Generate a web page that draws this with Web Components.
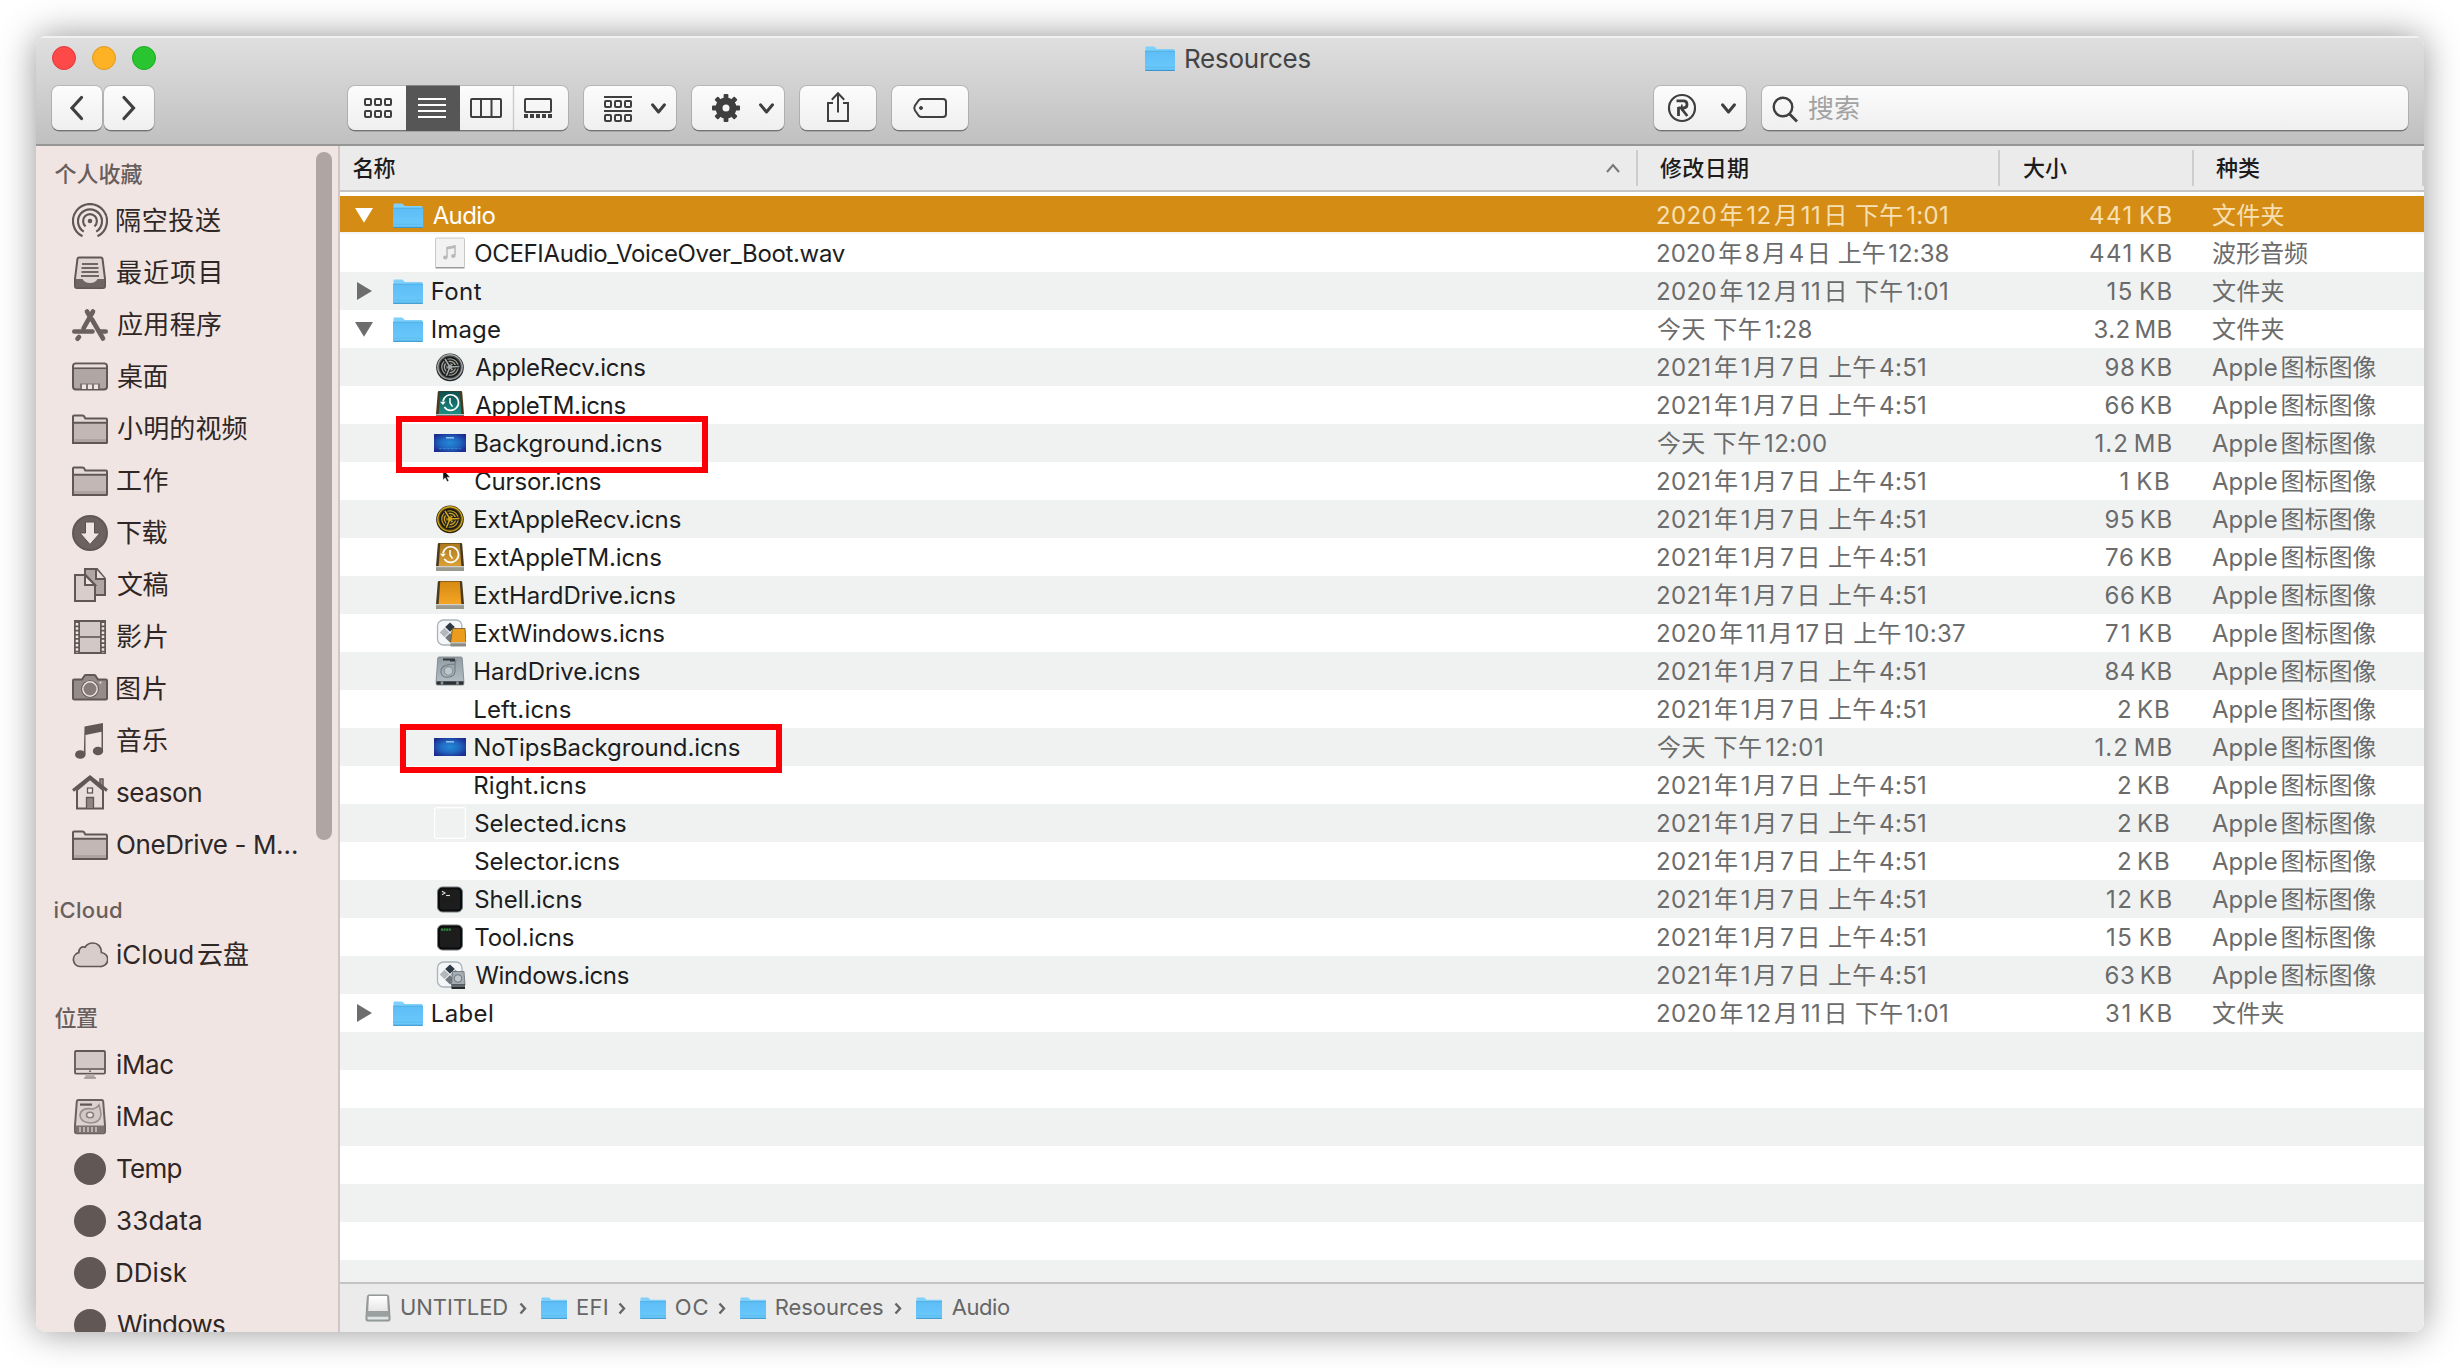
<!DOCTYPE html>
<html lang="zh-CN">
<head>
<meta charset="utf-8">
<title>Resources</title>
<style>
html,body{margin:0;padding:0;background:#fff;width:2460px;height:1368px;overflow:hidden}
body{font-family:Inter,"Noto Sans CJK SC",sans-serif;font-size:24px;color:#1d1d1d}
</style>
</head>
<body>
<finder-window></finder-window>
<script>
const define = (name, cls) => customElements.define(name, cls);
const ctx = document.createElement('canvas').getContext('2d');
const FOLDER = '<defs><linearGradient id="f" x1="0" y1="0" x2="0" y2="1"><stop offset="0" stop-color="#5dbdf6"/><stop offset="1" stop-color="#6bc9fb"/></linearGradient></defs><path d="M.5 23.500V1.500Q.5.5 1.500.5H8.500Q9.500.5 10.500 1.700L11.800 3H28.500Q29.500 3 29.500 4V23.500z" fill="#7fd0fa"/><path d="M0 5h30v18.500q0 1-1 1H1q-1 0-1-1z" fill="url(#f)"/><path d="M0 5.200h30" stroke="#52aee0" stroke-width="1"/><path d="M.5 21.300h29" stroke="#5ab6ea" stroke-width=".8"/><path d="M.3 24.300h29.400" stroke="#3d98cd" stroke-width="1.200"/>';
const recv = (a, b, c) => `<circle cx="16" cy="16.400" r="13.800" fill="${a}"/><circle cx="16" cy="16" r="12.200" fill="${b}" stroke="${c}" stroke-width="1.400"/><circle cx="16" cy="16" r="9.700" fill="${c}" stroke="#1b1a17" stroke-width="1.700"/><circle cx="16" cy="16" r="7" fill="none" stroke="#2b2924" stroke-width="1.500"/><circle cx="16" cy="16" r="4.300" fill="none" stroke="#2b2924" stroke-width="1.500"/><path d="M16 16L25.500 15.500M16 16L11 8M16 16L12.300 24.800" stroke="#1b1a17" stroke-width="3.600"/><path d="M16 16L25.500 15.500M16 16L11 8M16 16L12.300 24.800" stroke="${c}" stroke-width="1.600"/><circle cx="16" cy="16" r="2.200" fill="${c}"/>`;
const drive = (a, b, base, extra='') => `<defs><linearGradient id="d" x1="0" y1="0" x2="0" y2="1"><stop offset="0" stop-color="${a}"/><stop offset="1" stop-color="${b}"/></linearGradient></defs><path d="M5 2h22q1 0 1.200 1L30 25v4q0 1-1 1H3q-1 0-1-1v-4L3.800 3Q4 2 5 2z" fill="#4a3a20"/><path d="M6.200 2.600h19.600L27.300 25H4.700z" fill="url(#d)"/><path d="M2 25.300h28V29q0 1-1 1H3q-1 0-1-1z" fill="${base}"/><path d="M2 25.700h28" stroke="#e0e0dc" stroke-width="1"/><circle cx="27.500" cy="28" r=".8" fill="#5fbf55"/>${extra}`;
const CLOCK = '<path d="M9 12.300A7.800 7.800 0 1 1 10.300 18" fill="none" stroke="#fff" stroke-width="1.600"/><path d="M6 12.700l2.900 3.300 2.900-3.300z" fill="#fff"/><path d="M16 9v5l2.500 3.600" fill="none" stroke="#fff" stroke-width="1.500"/>';
const HDD = '<defs><linearGradient id="h" x1="0" y1="0" x2="0" y2="1"><stop offset="0" stop-color="#929da3"/><stop offset="1" stop-color="#b6c1c7"/></linearGradient></defs><path d="M5 2h22q1 0 1.200 1L29.800 25v4q0 1-1 1H3.200q-1 0-1-1v-4L3.800 3Q4 2 5 2z" fill="url(#h)" stroke="#777f84" stroke-width=".8"/><path d="M9 3.500h12v3h-5V5.500H9z" fill="#33383c"/><path d="M21 9v7.500c-1 7.500-13 7.500-14 1C6.500 12 10 9.500 21 9l1-4" fill="none" stroke="#737e84" stroke-width="1.200"/><circle cx="14.500" cy="16" r="4.300" fill="#bcc7cd" stroke="#78848b" stroke-width=".9"/><path d="M2.500 26.200h27V29q0 .8-1 .8H3.500q-1 0-1-.8z" fill="#2c3033"/><path d="M8 26.500v3M23.500 26.500v3" stroke="#8d979c" stroke-width="2.500"/>';
const WIN = '<rect x="3.500" y="3" width="24.500" height="25" rx="6" fill="#f4f6f8" stroke="#a9b3b9" stroke-width="1.300"/><path d="M16 5.500l4.800 4.600-4.800 4.600-4.800-4.600z" fill="#2d3a45"/><path d="M10.500 10.800l4.800 4.700-4.800 4.700-4.800-4.700z" fill="#b4b8bd"/><path d="M21.500 10.800l4.800 4.700-4.800 4.700-4.800-4.700z" fill="#8a9299"/><path d="M16 16l4.800 4.700-4.800 4.700-4.800-4.700z" fill="#6f767c"/>';
const THUMB = '<defs><radialGradient id="b" cx=".5" cy=".5" r=".6"><stop offset="0" stop-color="#218ad5"/><stop offset=".5" stop-color="#2069c2"/><stop offset="1" stop-color="#1c2c90"/></radialGradient></defs><rect y="7" width="32" height="18" fill="url(#b)"/><rect x="12" y="10" width="8" height="1.600" fill="#b3d9f5" opacity=".75"/>';
const TERM = '<rect x="3.500" y="4" width="25" height="25" rx="5" fill="#0b0b0b" stroke="#71797c" stroke-width="1"/><rect x="6" y="6.500" width="20" height="20" rx="2.500" fill="#1d1d1d"/>';
const S='fill="none" stroke="#615856" stroke-width="2"';
const SFOLD = `<path d="M1 33V5.500Q1 4.500 2 4.500H10.500Q12 4.500 12.500 6L13.300 7.500H34Q35 7.500 35 8.500V31Q35 32 34 32H2Q1 32 1 31z" fill="#e4dad8" stroke="#615856" stroke-width="2"/><path d="M2 12h32v19H2z" fill="#c3b7b5"/><path d="M2 29.500h32" stroke="#aea3a1" stroke-width="3"/><path d="M2 11.700h32M1 5v26q0 1 1 1h32q1 0 1-1V9" ${S}/>`;
const DISK = '<circle cx="18" cy="18" r="16" fill="#615856"/>';
/* Each entry: width, height, markup */
const ICONS = {
folder:[30,25,FOLDER],
wav:[32,32,'<rect x="1.500" y="1" width="29" height="29.500" rx="1" fill="#f2f2f2" stroke="#c8c8c8"/><path d="M1.500 30.800h29" stroke="#919191" stroke-width="1.300"/><path d="M13 20V10.500l8-1.500v9.500" fill="none" stroke="#b9b9b9" stroke-width="1.500"/><path d="M13 11.200l8-1.500" stroke="#b9b9b9" stroke-width="2.500"/><ellipse cx="11.300" cy="20.500" rx="2.300" ry="2" fill="#b9b9b9"/><ellipse cx="19.300" cy="19" rx="2.300" ry="2" fill="#b9b9b9"/>'],
recv:[32,32,recv('#23272a','#4a4e50','#a3a9aa')],
erecv:[32,32,recv('#2a2208','#54420e','#cfa41f')],
tm:[32,32,drive('#0c4f50','#1d8f84','#555',CLOCK)],
etm:[32,32,drive('#ad7a1e','#dba034','#9a9a90',CLOCK)],
ehd:[32,32,drive('#d58a12','#f4a526','#9a9a90')],
ewin:[32,32,WIN+'<path d="M18.500 11.500h12.500l1 14H16.500z" fill="#eb9c1c" stroke="#5a461d" stroke-width=".7"/><path d="M16.500 25.500H32V29.500H16.500z" fill="#8b8b84"/><path d="M16.500 25.800H32" stroke="#ddd"/>'],
win:[32,32,WIN+'<path d="M18.500 12.500H30l1 13.500H17.500z" fill="#a3adb3" stroke="#666e73" stroke-width=".8"/><circle cx="24" cy="19.500" r="3.800" fill="#bdc7cc" stroke="#6d777c"/><path d="M17.500 25.500H31V30H17.500z" fill="#272b2e"/><path d="M18 27h13" stroke="#8d979c" stroke-width="1.200"/>'],
hd:[32,32,HDD],
bg:[32,32,THUMB+'<path d="M5 21.500h22" stroke="#4da0e2" stroke-width=".8" stroke-dasharray="3 1" opacity=".6"/>'],
bg2:[32,32,THUMB],
none:[32,32,''],
cursor:[32,32,'<path d="M9 4.500V15l2.200-2.200 2 3.800 1.600-.8-1.900-3.600h3.200z" fill="#111" stroke="#ddd" stroke-width=".5"/>'],
selected:[32,32,'<rect x=".6" y=".6" width="30.800" height="30.800" rx="2" fill="none" stroke="#fff" stroke-width="1.200"/>'],
shell:[32,32,TERM+'<path d="M8 8.300l3 1.700-3 1.700" fill="none" stroke="#ddd" stroke-width="1.100"/><path d="M12 12.500h4" stroke="#ddd" stroke-width="1.100"/>'],
tool:[32,32,TERM+'<path d="M7 8.700h10" stroke="#2d8a3a" stroke-width="2.200" stroke-dasharray="2 .6"/>'],
usb:[26,28,'<defs><linearGradient id="u" x1="0" y1="0" x2="0" y2="1"><stop offset="0" stop-color="#fff"/><stop offset="1" stop-color="#e6e6e6"/></linearGradient></defs><path d="M4 1h18q1.500 0 1.600 1.500L25 23v2.500q0 1.500-1.500 1.500h-21Q1 27 1 25.500V23L2.400 2.500Q2.500 1 4 1z" fill="#9c9f9f" stroke="#8b9191"/><path d="M4 2h18l.8 15H3.200z" fill="url(#u)"/><path d="M2.500 22.800h21l-.3 2.700h-20.400z" fill="#dfe4e4"/>'],
airdrop:[36,36,`<g fill="none" stroke="#615856" stroke-width="2.200"><path d="M10.500 33.300A17 17 0 1 1 25.500 33.300"/><path d="M11.800 28.600A12 12 0 1 1 24.200 28.600"/><path d="M13.600 23.400A6.900 6.900 0 1 1 22.400 23.400"/></g><circle cx="18" cy="18" r="2.300" fill="#615856"/>`],
recents:[36,36,`<path d="M7 2.500h22q1.200 0 1.500 1.200L33 24v7q0 2-2 2H5q-2 0-2-2v-7L5.500 3.700Q5.800 2.500 7 2.500z" fill="#e0d5d3" ${S.replace('fill="none"','')}/><path d="M3.500 24h7q2 4 7.500 4t7.500-4h7v7q0 1.500-1.500 1.500H5Q3.500 32.500 3.500 31z" fill="#6f6563"/><path d="M10 9h16M9.500 13h17M9.500 17h17M9 21h18" stroke="#6f6563" stroke-width="1.800"/>`],
apps:[36,36,`<g stroke="#6a605e" stroke-width="4.600" stroke-linecap="round"><path d="M21 4.500L11.500 21.300M15 4.500L17 8M20 12.500L31 31.500"/><path d="M2.300 24.500H20.500M27.500 24.500H33.700M7 30L5.500 31.800"/></g>`],
desktop:[36,36,`<rect x="1" y="4.500" width="34" height="26" rx="3" fill="#b0a6a4" stroke="#615856" stroke-width="2"/><path d="M2 8.500V7q0-1.500 1.500-1.500h29Q34 5.500 34 7v1.500z" fill="#e9dedc"/><path d="M2 9.300h32" stroke="#615856" stroke-width="1.500"/><path d="M8 30v-5.500h20V30" fill="#7c726f"/><path d="M10 25.500h4V30h-4zM16 25.500h4V30h-4zM22 25.500h4V30h-4z" fill="#f0e5e3"/>`],
sfolder:[36,36,SFOLD],
down:[36,36,'<circle cx="18" cy="18" r="18" fill="#615856"/><circle cx="18" cy="18" r="16" fill="#6c6260"/><path d="M13.500 7h9v11H28L18 29.500 8 18h5.500z" fill="#f0e5e3" stroke="#5a514f" stroke-width="1"/>'],
docs:[36,36,`<path d="M13 2h12l8 9.500V28H13z" fill="#b0a6a4" ${S.replace('fill="none"','')}/><path d="M24 2v10h9" fill="#e6dcda" ${S.replace('fill="none"','')}/><path d="M3 8h10.500L23 18v16H3z" fill="#d8cdca" ${S.replace('fill="none"','')}/><path d="M13 8v10h10z" fill="#efe5e3" ${S.replace('fill="none"','')}/>`],
film:[36,36,`<rect x="3" y="2" width="30" height="32" fill="#d2c8c5" stroke="#615856" stroke-width="2"/><path d="M5 2v32M31 2v32" stroke="#615856" stroke-width="6"/><path d="M5 4v30M31 4v30" stroke="#efe5e3" stroke-width="2.500" stroke-dasharray="2.500 1.700"/><path d="M8 18h20" stroke="#615856" stroke-width="1.600"/>`],
camera:[36,36,`<path d="M2 8.500h8l2.500-3.800q.5-.7 1.500-.7h8q1 0 1.500.7L26 8.500h8q1 0 1 1V27q0 1.500-1.500 1.500h-31Q1 28.500 1 27V9.500q0-1 1-1z" fill="#958b88" ${S.replace('fill="none"','')}/><circle cx="18" cy="18" r="8.800" fill="#615856"/><circle cx="18" cy="18" r="7.200" fill="#877c7a" stroke="#f0e5e3" stroke-width="1.400"/><circle cx="28.500" cy="11.500" r="1" fill="#f0e5e3"/>`],
music:[36,36,'<path d="M12.500 3.500L31 0V27.500H29.500V8.700L13.500 12V31H11.800z" fill="#615856"/><ellipse cx="8.300" cy="31.500" rx="5.300" ry="4.300" fill="#615856"/><ellipse cx="26" cy="28" rx="5.200" ry="4.300" fill="#615856"/>'],
home:[36,36,`<path d="M28 10V4h3v9" fill="#a2918f" stroke="#615856" stroke-width="1.500"/><path d="M5 15v18.500h26V15L18 4z" fill="#e9dedc" ${S.replace('fill="none"','')}/><path d="M1 15.500L18 2l17 13.500" fill="none" stroke="#615856" stroke-width="3"/><rect x="15.500" y="13" width="5" height="5" fill="#f5ebe9" stroke="#615856" stroke-width="1.300"/><path d="M14.500 33V22.500h7V33" fill="#8f8482" stroke="#615856" stroke-width="1.300"/>`],
cloud:[36,36,`<path d="M8 29.500a7 7 0 0 1-1.200-13.800C6.800 11.500 9.500 9 13 10.200 14.800 7.300 17.600 6 20.800 6c5 0 8.800 4 8.600 9.500A7 7 0 0 1 28 29.500z" fill="#d8cdca" stroke="#615856" stroke-width="1.700"/>`],
imac:[36,36,`<rect x="3" y="4" width="30" height="22.500" rx="1" fill="#d2c8c5" stroke="#615856" stroke-width="1.800"/><path d="M3 22h30" stroke="#615856" stroke-width="1.500"/><path d="M4 23h28v2.700H4z" fill="#e4dad8"/><path d="M14 27h8l1 4H13z" fill="#b5aba9"/><path d="M12 31h12" stroke="#9a908e" stroke-width="1.400"/><circle cx="18" cy="24.200" r=".9" fill="#615856"/>`],
sdrive:[36,36,`<path d="M6.500 1h23Q31 1 31.200 2.500L33 26.500v6q0 1.700-1.700 1.700H4.700Q3 34.200 3 32.500v-6L4.800 2.500Q5 1 6.500 1z" fill="#ddd2d0" stroke="#6a605e" stroke-width="2"/><path d="M3.500 26.500h29V32.500q0 1.200-1.200 1.200H4.700q-1.200 0-1.200-1.200z" fill="#7c726f"/><path d="M8 28v5M12 28v5M16 28v5M20 28v5M24 28v5" stroke="#c3b8b6" stroke-width="1.800"/><rect x="8" y="4.500" width="12" height="2.200" fill="#615856"/><path d="M27 6q-2 3-6 4-12-2-13 6 0 7 10 8 10 0 11-8 0-3-2-10z" fill="#d2c8c5" stroke="#9a8f8d" stroke-width="1.600"/><ellipse cx="18" cy="16" rx="3.500" ry="2.700" fill="#f0e5e3" stroke="#8b807e" stroke-width="1.600"/>`],
disk:[36,36,DISK],
chev:[8,13,'<path d="M1.500 1.500L6 6.500 1.500 11.500" fill="none" stroke="#666" stroke-width="2.400"/>'],
open:[18,18,'<path d="M0 2h18L9 16.700z" fill="var(--tri,#6d6d6d)"/>'],
closed:[18,18,'<path d="M2 0l15 9-15 9z" fill="var(--tri,#6d6d6d)"/>'],
};
define('ui-icon', class extends HTMLElement {
  connectedCallback(){
    const [w,h,m] = ICONS[this.getAttribute('name')];
    const W = +(this.getAttribute('w')||w), H = +(this.getAttribute('h')||h);
    (this.shadowRoot||this.attachShadow({mode:'open'})).innerHTML = `<style>:host{display:block;flex:none;width:${W}px;height:${H}px}svg{display:block}</style><svg width="${W}" height="${H}" viewBox="0 0 ${w} ${h}" preserveAspectRatio="none">${m}</svg>`;
  }
});
/* Label whose visible glyphs span exactly the width given in "w" */
define('fit-text', class extends HTMLElement {
  connectedCallback(){
    const root = this.shadowRoot||this.attachShadow({mode:'open'});
    const t = this.textContent, w = +this.getAttribute('w');
    const gap = +(this.getAttribute('gap')||0), ws = +(this.getAttribute('ws')||0);
    root.innerHTML = `<style>:host{display:block;flex:none;white-space:pre;width:${w}px}b{font-weight:inherit;display:block;word-spacing:${ws}px}i{font-style:normal;margin-left:${gap}px}</style><b></b>`;
    const cs = getComputedStyle(this);
    ctx.font = `${cs.fontWeight} ${cs.fontSize} ${cs.fontFamily}`;
    const m = ctx.measureText(t);
    const parts = gap ? t.split(/(?<=[\x21-\x7e])(?=[\u4e00-\u9fff])|(?<=[\u4e00-\u9fff])(?=[\x21-\x7e])/) : [t];
    const spaces = (t.match(/ /g)||[]).length;
    const ink = m.actualBoundingBoxLeft + m.actualBoundingBoxRight + (parts.length-1)*gap + spaces*ws;
    const b = root.querySelector('b');
    b.style.letterSpacing = ((w-ink)/Math.max(1,t.length-1)).toFixed(3)+'px';
    b.style.marginLeft = m.actualBoundingBoxLeft.toFixed(2)+'px';
    parts.forEach((p,i)=>{ if(i===0) b.append(p); else {const s=document.createElement('i'); s.textContent=p; b.append(s);} });
  }
});
define('tool-button', class extends HTMLElement {
  connectedCallback(){
    this.attachShadow({mode:'open'}).innerHTML = `<style>:host{display:flex;box-sizing:border-box;flex:none;height:44px;width:${this.getAttribute('w')}px;margin-left:${this.getAttribute('gap')||0}px;border-radius:7px;background:linear-gradient(#fcfcfc,#efefef);box-shadow:0 0 0 1px rgba(0,0,0,.13),0 1.500px 0 rgba(0,0,0,.32);overflow:visible}</style><slot></slot>`;
  }
});
const sq = (x,y)=>[0,10,20].map(d=>`<rect x="${x+d+1}" y="${y+1}" width="6" height="6" rx="1"/>`).join('');
const dn = x => `<path d="M${x} 18.800l6 7.200 6-7.200" stroke-width="3" stroke-linecap="round" stroke-linejoin="round"/>`;
let teeth=''; for(let i=0;i<8;i++) teeth+=`<rect x="31.600" y="8" width="4.800" height="7" rx="1" transform="rotate(${i*45} 34 22)"/>`;
define('finder-toolbar', class extends HTMLElement {
  connectedCallback(){
    this.attachShadow({mode:'open'}).innerHTML = `<style>
:host{display:flex;flex-direction:column;box-sizing:border-box;height:110px;border-top:2px solid #f1f1f1;border-bottom:2px solid #969696;background:linear-gradient(#dfdfdf,#c0c0c0)}
.title{display:flex;height:40px;align-items:center;padding:0 16px}
.dot{width:24px;height:24px;border-radius:50%;box-sizing:border-box;margin-right:16px;border:1.500px solid}
.name{display:flex;align-items:center;gap:11px;margin-left:973px;font-size:26px;color:#444;line-height:40px}
.name fit-text{padding-top:2px}
.bar{display:flex;margin-top:8px;padding-left:16px}
svg{display:block;fill:none;stroke:#3f3f3f;stroke-width:2}
.search{display:flex;align-items:center;font-size:26px;line-height:42px;color:#a2a2a2}
.search fit-text{padding-top:2px}
</style>
<div class="title"><div class="dot" style="background:#fd4948;border-color:#e2383b"></div><div class="dot" style="background:#fdb225;border-color:#df9a1e"></div><div class="dot" style="background:#29c531;border-color:#1cab25"></div>
<div class="name"><ui-icon name="folder"></ui-icon><fit-text w="124.500">Resources</fit-text></div></div>
<div class="bar">
<tool-button w="50"><svg width="50" height="44"><path d="M29.500 11.500L20 22l9.500 10.500" stroke-width="3.200" stroke-linecap="round"/></svg></tool-button>
<tool-button w="50" gap="2"><svg width="50" height="44"><path d="M20 11.500L29.500 22 20 32.500" stroke-width="3.200" stroke-linecap="round"/></svg></tool-button>
<tool-button w="220" gap="194"><svg width="220" height="44" style="overflow:visible"><rect x="58" y="-.5" width="54" height="45.500" fill="#565656" stroke="none"/><path d="M165.500 0v44" stroke="#cdcdcd" stroke-width="1.500"/>${sq(16,12)}${sq(16,24)}<path d="M70 13h28M70 19h28M70 25h28M70 31h28" stroke="#fff"/><rect x="123" y="13" width="30" height="18" rx="1"/><path d="M133 13v18M143.500 13v18"/><rect x="177" y="13" width="26" height="13" rx="1"/><path d="M176 30h28" stroke-width="4" stroke-dasharray="4 2"/></svg></tool-button>
<tool-button w="92" gap="16"><svg width="92" height="44"><path d="M20 11h28M20 25h28"/>${sq(20,14)}${sq(20,28)}${dn(68.5)}</svg></tool-button>
<tool-button w="92" gap="16"><svg width="92" height="44"><g fill="#3f3f3f" stroke="none">${teeth}</g><circle cx="34" cy="22" r="7" stroke-width="7"/>${dn(68.5)}</svg></tool-button>
<tool-button w="76" gap="16"><svg width="76" height="44"><path d="M33 17H28v18h20V17h-5M38 26.500V7.500M31.800 13.700L38 7.300l6.200 6.400"/></svg></tool-button>
<tool-button w="76" gap="16"><svg width="76" height="44"><path d="M29.500 13H51q3 0 3 3v12q0 3-3 3H29.500Q28 31 27 30L23 24.500q-1.500-2.500 0-5L27 14q1-1 2.500-1z"/><circle cx="29" cy="22" r="1.500" fill="#3f3f3f" stroke-width="1"/></svg></tool-button>
<tool-button w="92" gap="686"><svg width="92" height="44"><circle cx="28" cy="22" r="13" stroke-width="2.200"/><path d="M22.500 14.800h7q3.500 0 3.500 3.600 0 3.300-3.500 3.600h-2.500l6.300 8M24.500 21v9" stroke-width="2.800"/><path d="M27.800 18.500v6" stroke-width="1.600"/>${dn(68.5)}</svg></tool-button>
<tool-button w="646" gap="16"><div class="search"><svg width="47" height="44"><circle cx="21" cy="21" r="9.300" stroke-width="2.400"/><path d="M27.500 28l7.500 7.500" stroke-width="2.800"/></svg><fit-text w="50">搜索</fit-text></div></tool-button>
</div>`;
  }
});
define('side-item', class extends HTMLElement {
  connectedCallback(){
    this.attachShadow({mode:'open'}).innerHTML = `<style>:host{display:flex;height:52px;flex:none;align-items:center;gap:9px;padding-left:36px;font-size:26px;line-height:52px;color:#2f2725}</style><ui-icon name="${this.getAttribute('icon')}"></ui-icon><slot></slot>`;
  }
});
define('side-section', class extends HTMLElement {
  connectedCallback(){
    this.attachShadow({mode:'open'}).innerHTML = `<style>:host{display:flex;flex-direction:column;flex:none;padding-top:${this.getAttribute('pad')}px}header{font-size:22px;font-weight:500;color:#685e5c;padding-left:18.500px;padding-bottom:${this.getAttribute('low')}px;line-height:38px;height:38px}</style><header><slot name="head"></slot></header><slot></slot>`;
  }
});
const SIDE = [
 [9,2,'个人收藏',88,[['airdrop','隔空投送',104],['recents','最近项目',102.500],['apps','应用程序',104],['desktop','桌面',50.500],['sfolder','小明的视频',130.500],['sfolder','工作',50.500],['down','下载',50.500],['docs','文稿',50.500],['film','影片',50],['camera','图片',49],['music','音乐',50],['home','season',84.300],['sfolder','OneDrive - M…',180]]],
 [20,0,'iCloud',66.5,[['cloud','iCloud云盘',131]]],
 [18,2,'位置',42.5,[['imac','iMac',56.300],['sdrive','iMac',56.300],['disk','Temp',64.500],['disk','33data',84],['disk','DDisk',69.700],['disk','Windows',108]]]
];
define('finder-sidebar', class extends HTMLElement {
  connectedCallback(){
    this.attachShadow({mode:'open'}).innerHTML = `<style>:host{display:flex;box-sizing:border-box;width:304px;flex:none;background:#f0e5e3;border-right:2px solid #d0c6c6;overflow:hidden}.list{flex:1;display:flex;flex-direction:column;min-width:0}.thumb{width:16px;height:688px;margin:6px 6px 0 0;border-radius:8px;background:#afa5a3;flex:none}</style><div class="list">${SIDE.map(([p,l,h,w,it])=>`<side-section pad="${p}" low="${l}"><fit-text slot="head" w="${w}">${h}</fit-text>${it.map(([i,t,w])=>`<side-item icon="${i}"><fit-text w="${w}"${/[a-z][\u4e00-\u9fff]/.test(t)?' gap="3"':''}>${t}</fit-text></side-item>`).join('')}</side-section>`).join('')}</div><div class="thumb"></div>`;
  }
});
const D='2021年1月7日 上午4:51', DW=268, A='Apple图标图像', AW=164.5, F='文件夹', FW=71.5;
/* arrow, icon, name, width, date, width, size, width, kind, width */
const ROWS = [
 ['open','folder','Audio',62.7,'2020年12月11日 下午1:01',290,'441 KB',81.4,F,FW],
 ['','wav','OCEFIAudio_VoiceOver_Boot.wav',369.5,'2020年8月4日 上午12:38',291.5,'441 KB',81.4,'波形音频',96],
 ['closed','folder','Font',49,'2020年12月11日 下午1:01',290,'15 KB',64,F,FW],
 ['open','folder','Image',67.3,'今天 下午1:28',154.5,'3.2 MB',77,F,FW],
 ['','recv','AppleRecv.icns',170,D,DW,'98 KB',66,A,AW],
 ['','tm','AppleTM.icns',150.3,D,DW,'66 KB',66,A,AW],
 ['','bg','Background.icns',186.5,'今天 下午12:00',169,'1.2 MB',76,A,AW],
 ['','cursor','Cursor.icns',125.5,D,DW,'1 KB',48.5,A,AW],
 ['','erecv','ExtAppleRecv.icns',205.5,D,DW,'95 KB',66,A,AW],
 ['','etm','ExtAppleTM.icns',186,D,DW,'76 KB',65.5,A,AW],
 ['','ehd','ExtHardDrive.icns',200,D,DW,'66 KB',66,A,AW],
 ['','ewin','ExtWindows.icns',189,'2020年11月17日 上午10:37',308,'71 KB',65.5,A,AW],
 ['','hd','HardDrive.icns',164.5,D,DW,'84 KB',66,A,AW],
 ['','none','Left.icns',95.5,D,DW,'2 KB',51,A,AW],
 ['','bg2','NoTipsBackground.icns',264.5,'今天 下午12:01',165,'1.2 MB',76,A,AW],
 ['','none','Right.icns',110.7,D,DW,'2 KB',51,A,AW],
 ['','selected','Selected.icns',150.7,D,DW,'2 KB',51,A,AW],
 ['','none','Selector.icns',144,D,DW,'2 KB',51,A,AW],
 ['','shell','Shell.icns',106.5,D,DW,'12 KB',64.5,A,AW],
 ['','tool','Tool.icns',98.5,D,DW,'15 KB',64.5,A,AW],
 ['','win','Windows.icns',153.5,D,DW,'63 KB',66,A,AW],
 ['closed','folder','Label',59.3,'2020年12月11日 下午1:01',290,'31 KB',65.5,F,FW]
];
define('file-row', class extends HTMLElement {
  connectedCallback(){
    const i = +this.getAttribute('index'), r = ROWS[i], top = !!r && !!r[0];
    this.attachShadow({mode:'open'}).innerHTML = `<style>
:host{display:grid;box-sizing:border-box;height:38px;flex:none;grid-template-columns:1317px 400px 114.500px 40.500px 1fr;line-height:40px;background:${i===0?'#d48c14':i%2?'#fff':'#f0f2f2'};${i===0?'border-bottom:2px solid #f4f4f4;color:#fff;--tri:#fff;--sub:#f7e0b4;':''}}
.n{display:flex;align-items:center;height:38px;padding-left:${top?15:94}px}
.n fit-text{line-height:38px;padding-top:2px}
.n ui-icon:nth-last-child(2){margin-left:${top?20:0}px;margin-right:${top?9.7:9.2}px}
.s{color:var(--sub,#6b6b6b);display:flex}.r{justify-content:flex-end${r&&/^\d KB/.test(r[6])?';padding-right:2.500px':''}}</style>` + (r?`<div class="n">${top?`<ui-icon name="${r[0]}"></ui-icon>`:''}<ui-icon name="${r[1]}"></ui-icon><fit-text w="${r[3]}">${r[2]}</fit-text></div><div class="s"><fit-text w="${r[5]}" gap="2.500">${r[4]}</fit-text></div><div class="s r"><fit-text w="${r[7]}" ws="-3">${r[6]}</fit-text></div><span></span><div class="s"><fit-text w="${r[9]}" gap="3">${r[8]}</fit-text></div>`:'');
  }
});
define('column-header', class extends HTMLElement {
  connectedCallback(){
    this.attachShadow({mode:'open'}).innerHTML = `<style>:host{display:flex;box-sizing:border-box;height:46px;flex:none;background:#ebebeb;border-bottom:2px solid #c5c5c5;font-size:22px;font-weight:500;line-height:44px;color:#1c1c1c}div{display:flex;align-items:center;box-sizing:border-box;height:36px;margin-top:4px;border-right:2px solid #cdcdcd;flex:none}svg{margin-left:auto;margin-right:16px}</style>
<div style="width:1298px;padding-left:12.500px"><fit-text w="43">名称</fit-text><svg width="14" height="10"><path d="M1 9l6-7 6 7" fill="none" stroke="#777" stroke-width="2"/></svg></div><div style="width:362px;padding-left:22px"><fit-text w="88">修改日期</fit-text></div><div style="width:194px;padding-left:23px"><fit-text w="44">大小</fit-text></div><div style="width:230px;padding-left:22px"><fit-text w="44">种类</fit-text></div>`;
  }
});
define('path-bar', class extends HTMLElement {
  connectedCallback(){
    /* name, label width, space before the arrow, space after it */
    const P=[['EFI',29.7,11.5,14],['OC',31.7,11,14],['Resources',107.3,10.5,13.5],['Audio',58.3,11,13.5]];
    this.attachShadow({mode:'open'}).innerHTML = `<style>:host{display:flex;align-items:center;box-sizing:border-box;height:50px;flex:none;background:#ebebeb;border-top:2px solid #c3c3c3;padding-left:25px;font-size:22px;line-height:46px;color:#666}fit-text{height:48px}.t{margin-left:10px}</style><ui-icon name="usb"></ui-icon><fit-text class="t" w="106.300">UNTITLED</fit-text>`+P.map(p=>`<ui-icon style="margin:0 ${p[3]}px 0 ${p[2]}px" name="chev"></ui-icon><ui-icon name="folder" w="26.500" h="22"></ui-icon><fit-text style="margin-left:9.700px" w="${p[1]}">${p[0]}</fit-text>`).join('');
  }
});
define('red-mark', class extends HTMLElement {
  connectedCallback(){
    const [x,y,w,h]=this.getAttribute('box').split(' ');
    this.attachShadow({mode:'open'}).innerHTML = `<style>:host{position:absolute;box-sizing:border-box;left:${x}px;top:${y}px;width:${w}px;height:${h}px;border:6px solid #fb0007}</style>`;
  }
});
define('finder-window', class extends HTMLElement {
  connectedCallback(){
    this.attachShadow({mode:'open'}).innerHTML = `<style>
:host{display:block;padding:36px;width:2388px;height:1296px}
.win{display:flex;flex-direction:column;width:2388px;height:1296px;border-radius:10px;overflow:hidden}
.shade{border-radius:10px;box-shadow:0 0 36px rgba(0,0,0,.42)}
.body{display:flex;flex:1;min-height:0}
main{flex:1;display:flex;flex-direction:column;min-width:0;background:#fff}
.rows{flex:1;min-height:0;overflow:hidden;padding-top:4px;display:flex;flex-direction:column}
</style><div class="shade"><div class="win"><finder-toolbar></finder-toolbar><div class="body"><finder-sidebar></finder-sidebar><main><column-header></column-header><div class="rows">${Array.from({length:29},(_,i)=>`<file-row index="${i}"></file-row>`).join('')}</div><path-bar></path-bar></main></div></div></div><red-mark box="396 416 312 57"></red-mark><red-mark box="400 724 382 49"></red-mark>`;
  }
});
</script>
</body>
</html>
